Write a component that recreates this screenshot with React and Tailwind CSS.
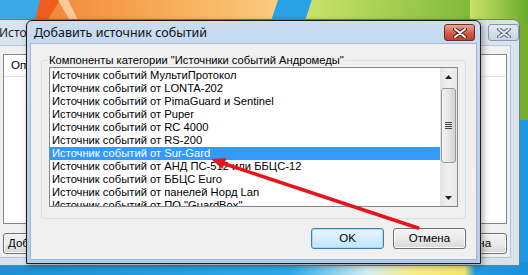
import React from "react";

const items = [
  "Источник событий МультиПротокол",
  "Источник событий от LONTA-202",
  "Источник событий от PimaGuard и Sentinel",
  "Источник событий от Puper",
  "Источник событий от RC 4000",
  "Источник событий от RS-200",
  "Источник событий от Sur-Gard",
  "Источник событий от АНД ПС-512 или ББЦС-12",
  "Источник событий от ББЦС Euro",
  "Источник событий от панелей Норд Lan",
  "Источник событий от ПО \"GuardBox\"",
];

const font = "font-['Noto_Sans',sans-serif]";
const ui = "font-['Liberation_Sans',Arial,sans-serif]";

function Wallpaper() {
  return (
    <svg className="absolute inset-0" width="528" height="275" viewBox="0 0 528 275">
      <defs>
        <linearGradient id="top" x1="0" y1="0" x2="1" y2="0">
          <stop offset="0" stopColor="#f07a2c" />
          <stop offset="0.35" stopColor="#f7b25e" />
          <stop offset="0.75" stopColor="#fcedb0" />
          <stop offset="1" stopColor="#fbe69a" />
        </linearGradient>
        <linearGradient id="grn" x1="0" y1="0" x2="1" y2="0">
          <stop offset="0" stopColor="#c8e46a" />
          <stop offset="1" stopColor="#6aab2a" />
        </linearGradient>
        <linearGradient id="bot" x1="0" y1="0" x2="1" y2="0">
          <stop offset="0" stopColor="#1b8fd6" />
          <stop offset="0.55" stopColor="#2aaae8" />
          <stop offset="0.7" stopColor="#d9f0f0" />
          <stop offset="0.78" stopColor="#f8ee86" />
          <stop offset="0.88" stopColor="#f3e56a" />
          <stop offset="0.9" stopColor="#1d9be2" />
          <stop offset="1" stopColor="#1890dc" />
        </linearGradient>
      </defs>
      <rect x="0" y="0" width="528" height="275" fill="#1f9ae0" />
      <rect x="0" y="0" width="528" height="24" fill="url(#top)" />
      <polygon points="0,0 40,0 36,24 0,24" fill="#3aa8e4" />
      <polygon points="40,0 60,0 45,24 34,24" fill="#ef5e20" />
      <polygon points="58,0 68,0 80,24 72,24" fill="#fbc99a" />
      <polygon points="278,0 312,0 304,24 270,24" fill="#27a2e4" />
      <polygon points="312,0 528,0 528,24 305,24" fill="url(#grn)" />
      <rect x="470" y="0" width="58" height="120" fill="#74b02c" />
      <rect x="470" y="0" width="58" height="24" fill="url(#grn)" />
      <rect x="0" y="262" width="528" height="13" fill="url(#bot)" />
    </svg>
  );
}

function CloseBtn({ active }) {
  return (
    <div
      className={
        active
          ? "flex h-[17px] w-[31px] items-center justify-center rounded-[3px] border border-[#6f2a22] bg-gradient-to-b from-[#e9a597] via-[#d0604b] to-[#c0402c]"
          : "flex h-[17px] w-[31px] items-center justify-center rounded-[3px] border border-[#8796aa] bg-gradient-to-b from-[#e3eaf2] to-[#c9d5e3]"
      }
    >
      <svg width="14" height="10" viewBox="0 0 14 10">
        <path
          d="M2 1 L12 9 M12 1 L2 9"
          stroke={active ? "#4a1a14" : "#5a6270"}
          strokeWidth="4"
          strokeLinecap="round"
        />
        <path
          d="M2 1 L12 9 M12 1 L2 9"
          stroke={active ? "#ffffff" : "#eef2f6"}
          strokeWidth="2"
          strokeLinecap="round"
        />
      </svg>
    </div>
  );
}

function WinButton({ children, focused, className = "" }) {
  return (
    <div
      className={`flex h-[21px] w-[73px] items-center justify-center rounded-[3px] border text-[11.5px] text-black ${ui} ${
        focused
          ? "border-[#3c7fb1] bg-gradient-to-b from-[#eaf6fd] to-[#bee6fd] shadow-[inset_0_0_0_1px_#a7d9f5]"
          : "border-[#707070] bg-gradient-to-b from-[#f2f2f2] via-[#ebebeb] to-[#d6d6d6] shadow-[inset_0_0_0_1px_#fcfcfc]"
      } ${className}`}
    >
      {children}
    </div>
  );
}

function Scrollbar() {
  return (
    <div className="flex w-[17px] flex-col bg-gradient-to-r from-[#e3e3e3] via-[#f0f0f0] to-[#e8e8e8]">
      <div className="flex h-[17px] items-center justify-center">
        <svg width="7" height="4" viewBox="0 0 7 4">
          <polygon points="0,4 3.5,0 7,4" fill="#222" />
        </svg>
      </div>
      <div className="mx-[1px] mt-[3px] flex h-[75px] flex-col items-center justify-center gap-[1px] rounded-[3px] border border-[#9a9a9a] bg-gradient-to-r from-[#f4f4f4] via-[#e6e6e6] to-[#d4d4d4]">
        <div className="h-[1px] w-[7px] bg-[#444]" />
        <div className="h-[1px] w-[7px] bg-[#444]" />
        <div className="h-[1px] w-[7px] bg-[#444]" />
        <div className="h-[1px] w-[7px] bg-[#444]" />
      </div>
      <div className="flex-1" />
      <div className="flex h-[17px] items-center justify-center">
        <svg width="7" height="4" viewBox="0 0 7 4">
          <polygon points="0,0 3.5,4 7,0" fill="#222" />
        </svg>
      </div>
    </div>
  );
}

function BackWindow() {
  return (
    <div className="absolute left-[-10px] top-[19px] flex h-[247px] w-[530px] flex-col rounded-t-[7px] border border-[#6d7b8c] bg-[#d9e3ee]">
      <div className={`flex h-[25px] items-center pl-[8px] text-[12px] text-[#1e1e1e] ${font}`}>
        <span className="w-[28px] overflow-hidden whitespace-nowrap">Источник</span>
      </div>
      <div className="mx-[8px] mb-[7px] flex flex-1 flex-col border border-[#b5c3d3] bg-[#f0f0f0] px-[3px] pt-[8px]">
        <div className="flex h-[170px] flex-col border border-[#828790] bg-white">
          <div className={`flex h-[22px] items-center border-b border-[#e5e5e5] pl-[7px] text-[11.5px] ${ui}`}>
            <span className="w-[20px] overflow-hidden whitespace-nowrap">Описание</span>
          </div>
        </div>
        <div className="mt-[9px] flex justify-between">
          <WinButton className="w-[78px] justify-start pl-[4px]">Добавить</WinButton>
          <WinButton className="w-[70px]">Отмена</WinButton>
        </div>
      </div>
    </div>
  );
}

function Dialog() {
  return (
    <div className="absolute left-[26px] top-[20px] flex h-[244px] w-[455px] flex-col rounded-t-[6px] border border-[#1c1c1c] bg-gradient-to-b from-[#c9dcf1] via-[#b9d0ea] to-[#b4cce6] shadow-[2px_2px_6px_rgba(0,0,0,0.35)]">
      <div className="flex h-[22px] items-center justify-between pl-[7px] pr-[5px]">
        <span className={`pt-[2px] text-[12.5px] text-[#111] ${font}`}>Добавить источник событий</span>
        <div className="self-start pt-[3px]">
          <CloseBtn active />
        </div>
      </div>
      <div className={`mx-[3px] mb-[3px] flex flex-1 flex-col border border-[#a4b9d0] bg-[#f0f0f0] px-[10px] pt-[10px] ${ui}`}>
        <fieldset className="h-[165px] rounded-[3px] border border-[#d5dfe5] px-[7px] pb-[9px]">
          <legend className="ml-[-1px] px-[1px] text-[11.2px] leading-[12px] text-black">
            Компоненты категории "Источники событий Андромеды"
          </legend>
          <div className="mt-[1px] flex h-[140px] border border-[#828790] bg-white">
            <div className="flex-1 overflow-hidden pt-[1px]">
              {items.map((t, i) => (
                <div
                  key={t}
                  className={`h-[13px] overflow-hidden whitespace-nowrap pl-[2px] text-[11.2px] leading-[13px] ${
                    i === 6 ? "bg-[#3399ff] text-white" : "text-black"
                  }`}
                >
                  {t}
                </div>
              ))}
            </div>
            <Scrollbar />
          </div>
        </fieldset>
        <div className="mt-[9px] flex justify-end gap-[9px]">
          <WinButton focused>OK</WinButton>
          <WinButton>Отмена</WinButton>
        </div>
      </div>
    </div>
  );
}

function Arrow() {
  return (
    <svg className="pointer-events-none absolute inset-0" width="528" height="275" viewBox="0 0 528 275">
      <line x1="418" y1="228" x2="222" y2="163" stroke="#e8141c" strokeWidth="3.5" strokeLinecap="round" />
      <polygon points="211,159 226.5,158 222.5,169" fill="#e8141c" />
    </svg>
  );
}

export default function App() {
  return (
    <div className="relative h-[275px] w-[528px] overflow-hidden">
      <Wallpaper />
      <BackWindow />
      <div className="absolute left-[488px] top-[24px]">
        <CloseBtn />
      </div>
      <Dialog />
      <Arrow />
    </div>
  );
}
